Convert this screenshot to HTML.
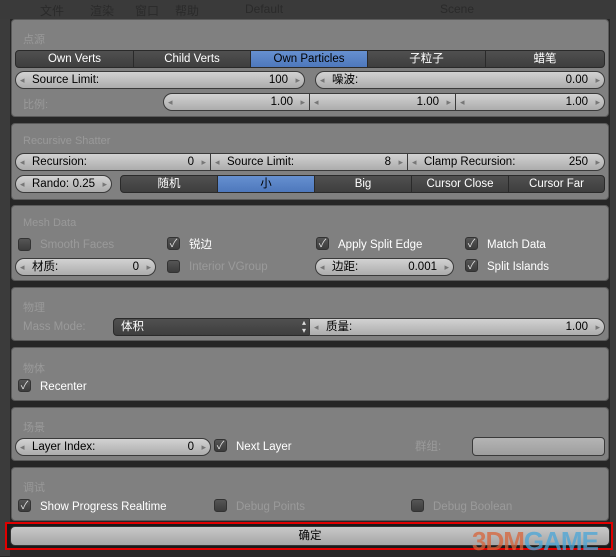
<!DOCTYPE html>
<html><head><meta charset="utf-8"><style>
*{margin:0;padding:0;box-sizing:border-box}
body{width:616px;height:556px;overflow:hidden;background:#262626;font-family:"Liberation Sans","Noto Sans CJK SC",sans-serif;font-size:11.5px;position:relative}
.top{position:absolute;left:0;top:0;width:616px;height:19px;background:#3a3a3a;color:#2a2a2a;font-size:12px}
.top span{position:absolute;top:2px}
.side{position:absolute;left:0;top:19px;width:10px;height:537px;background:#3b3b3b}
.sideR{position:absolute;right:0;top:19px;width:6px;height:537px;background:#3b3b3b}
.p{position:absolute;left:11px;width:598px;background:#808080;border-radius:4px;border:1px solid #5a5a5a}
.h{position:absolute;left:23px;color:#999;font-size:11px}
.b{position:absolute;height:18px;background:linear-gradient(#505050,#3e3e3e);color:#fff;text-align:center;line-height:17px;border:1px solid #2a2a2a}
.b.s{background:linear-gradient(#6690d0,#4e78bc);color:#000}
.f{position:absolute;height:18px;background:linear-gradient(#d2d2d2,#acacac);border:1px solid #3a3a3a;color:#000;line-height:16px;padding:0 16px;display:flex;justify-content:space-between}
.f:before{content:"◂";position:absolute;left:4px;color:#777;font-size:9px}
.f:after{content:"▸";position:absolute;right:4px;color:#777;font-size:9px}
.r{border-radius:9px}
.c{position:absolute;width:13px;height:13px;border-radius:3px;background:linear-gradient(#555,#3c3c3c);border:1px solid #333;color:#ddd;font-size:11px;line-height:12px;text-align:center;text-indent:0}
.l{position:absolute;color:#fff;line-height:14px}
.d{color:#9a9a9a}
</style></head><body>
<div class="top"><span style="left:40px">文件</span><span style="left:90px">渲染</span><span style="left:135px">窗口</span><span style="left:175px">帮助</span><span style="left:245px">Default</span><span style="left:440px">Scene</span></div>
<div class="side"></div><div class="sideR"></div>

<div class="p" style="top:19px;height:98px"></div>
<div class="h" style="top:31px">点源</div>
<div class="b" style="left:15px;top:50px;width:119px;border-radius:4px 0 0 4px">Own Verts</div>
<div class="b" style="left:133px;top:50px;width:118px">Child Verts</div>
<div class="b s" style="left:250px;top:50px;width:118px">Own Particles</div>
<div class="b" style="left:367px;top:50px;width:119px">子粒子</div>
<div class="b" style="left:485px;top:50px;width:120px;border-radius:0 4px 4px 0">蜡笔</div>
<div class="f r" style="left:15px;top:71px;width:290px"><span>Source Limit:</span><span>100</span></div>
<div class="f r" style="left:315px;top:71px;width:290px"><span>噪波:</span><span>0.00</span></div>
<div class="h" style="top:96px">比例:</div>
<div class="f" style="left:163px;top:93px;width:147px;border-radius:9px 0 0 9px"><span></span><span>1.00</span></div>
<div class="f" style="left:309px;top:93px;width:147px"><span></span><span>1.00</span></div>
<div class="f" style="left:455px;top:93px;width:150px;border-radius:0 9px 9px 0"><span></span><span>1.00</span></div>

<div class="p" style="top:123px;height:77px"></div>
<div class="h" style="top:135px">Recursive Shatter</div>
<div class="f" style="left:15px;top:153px;width:196px;border-radius:9px 0 0 9px"><span>Recursion:</span><span>0</span></div>
<div class="f" style="left:210px;top:153px;width:198px"><span>Source Limit:</span><span>8</span></div>
<div class="f" style="left:407px;top:153px;width:198px;border-radius:0 9px 9px 0"><span>Clamp Recursion:</span><span>250</span></div>
<div class="f r" style="left:15px;top:175px;width:97px"><span>Rando:</span><span>0.25</span></div>
<div class="b" style="left:120px;top:175px;width:98px;border-radius:4px 0 0 4px">随机</div>
<div class="b s" style="left:217px;top:175px;width:98px">小</div>
<div class="b" style="left:314px;top:175px;width:98px">Big</div>
<div class="b" style="left:411px;top:175px;width:98px">Cursor Close</div>
<div class="b" style="left:508px;top:175px;width:97px;border-radius:0 4px 4px 0">Cursor Far</div>

<div class="p" style="top:205px;height:76px"></div>
<div class="h" style="top:217px">Mesh Data</div>
<div class="c" style="left:18px;top:238px"></div><div class="l d" style="left:40px;top:238px">Smooth Faces</div>
<div class="c" style="left:167px;top:237px">✓</div><div class="l" style="left:189px;top:238px">锐边</div>
<div class="c" style="left:316px;top:237px">✓</div><div class="l" style="left:338px;top:238px">Apply Split Edge</div>
<div class="c" style="left:465px;top:237px">✓</div><div class="l" style="left:487px;top:238px">Match Data</div>
<div class="f r" style="left:15px;top:258px;width:141px"><span>材质:</span><span>0</span></div>
<div class="c" style="left:167px;top:260px"></div><div class="l d" style="left:189px;top:260px">Interior VGroup</div>
<div class="f r" style="left:315px;top:258px;width:139px"><span>边距:</span><span>0.001</span></div>
<div class="c" style="left:465px;top:259px">✓</div><div class="l" style="left:487px;top:260px">Split Islands</div>

<div class="p" style="top:287px;height:54px"></div>
<div class="h" style="top:299px">物理</div>
<div class="l d" style="left:23px;top:320px">Mass Mode:</div>
<div class="b" style="left:113px;top:318px;width:197px;text-align:left;padding-left:7px;border-radius:4px 0 0 4px">体积<span style="position:absolute;right:3px;top:0;font-size:8px;line-height:8px;color:#ddd">▴<br>▾</span></div>
<div class="f" style="left:309px;top:318px;width:296px;border-radius:0 9px 9px 0"><span>质量:</span><span>1.00</span></div>

<div class="p" style="top:347px;height:54px"></div>
<div class="h" style="top:360px">物体</div>
<div class="c" style="left:18px;top:379px">✓</div><div class="l" style="left:40px;top:380px">Recenter</div>

<div class="p" style="top:407px;height:54px"></div>
<div class="h" style="top:419px">场景</div>
<div class="f r" style="left:15px;top:438px;width:196px"><span>Layer Index:</span><span>0</span></div>
<div class="c" style="left:214px;top:439px">✓</div><div class="l" style="left:236px;top:440px">Next Layer</div>
<div class="l d" style="left:415px;top:440px">群组:</div>
<div style="position:absolute;left:472px;top:437px;width:133px;height:19px;border-radius:4px;background:linear-gradient(#b4b4b4,#9e9e9e);border:1px solid #3a3a3a"></div>

<div class="p" style="top:467px;height:54px"></div>
<div class="h" style="top:479px">调试</div>
<div class="c" style="left:18px;top:499px">✓</div><div class="l" style="left:40px;top:500px">Show Progress Realtime</div>
<div class="c" style="left:214px;top:499px"></div><div class="l d" style="left:236px;top:500px">Debug Points</div>
<div class="c" style="left:411px;top:499px"></div><div class="l d" style="left:433px;top:500px">Debug Boolean</div>

<div style="position:absolute;left:5px;top:522px;width:608px;height:28px;border:2px solid #e00000;background:#1a1a1a"></div>
<div style="position:absolute;left:10px;top:526px;width:600px;height:20px;border-radius:5px;background:linear-gradient(#c8c8c8,#a6a6a6);border:1px solid #333;text-align:center;line-height:18px;color:#000">确定</div>
<div style="position:absolute;left:472px;top:526px;font-size:26px;font-weight:bold;color:#d8643a;letter-spacing:-1px;opacity:.75">3DM<span style="color:#4aa6d8">GAME</span></div>
</body></html>
